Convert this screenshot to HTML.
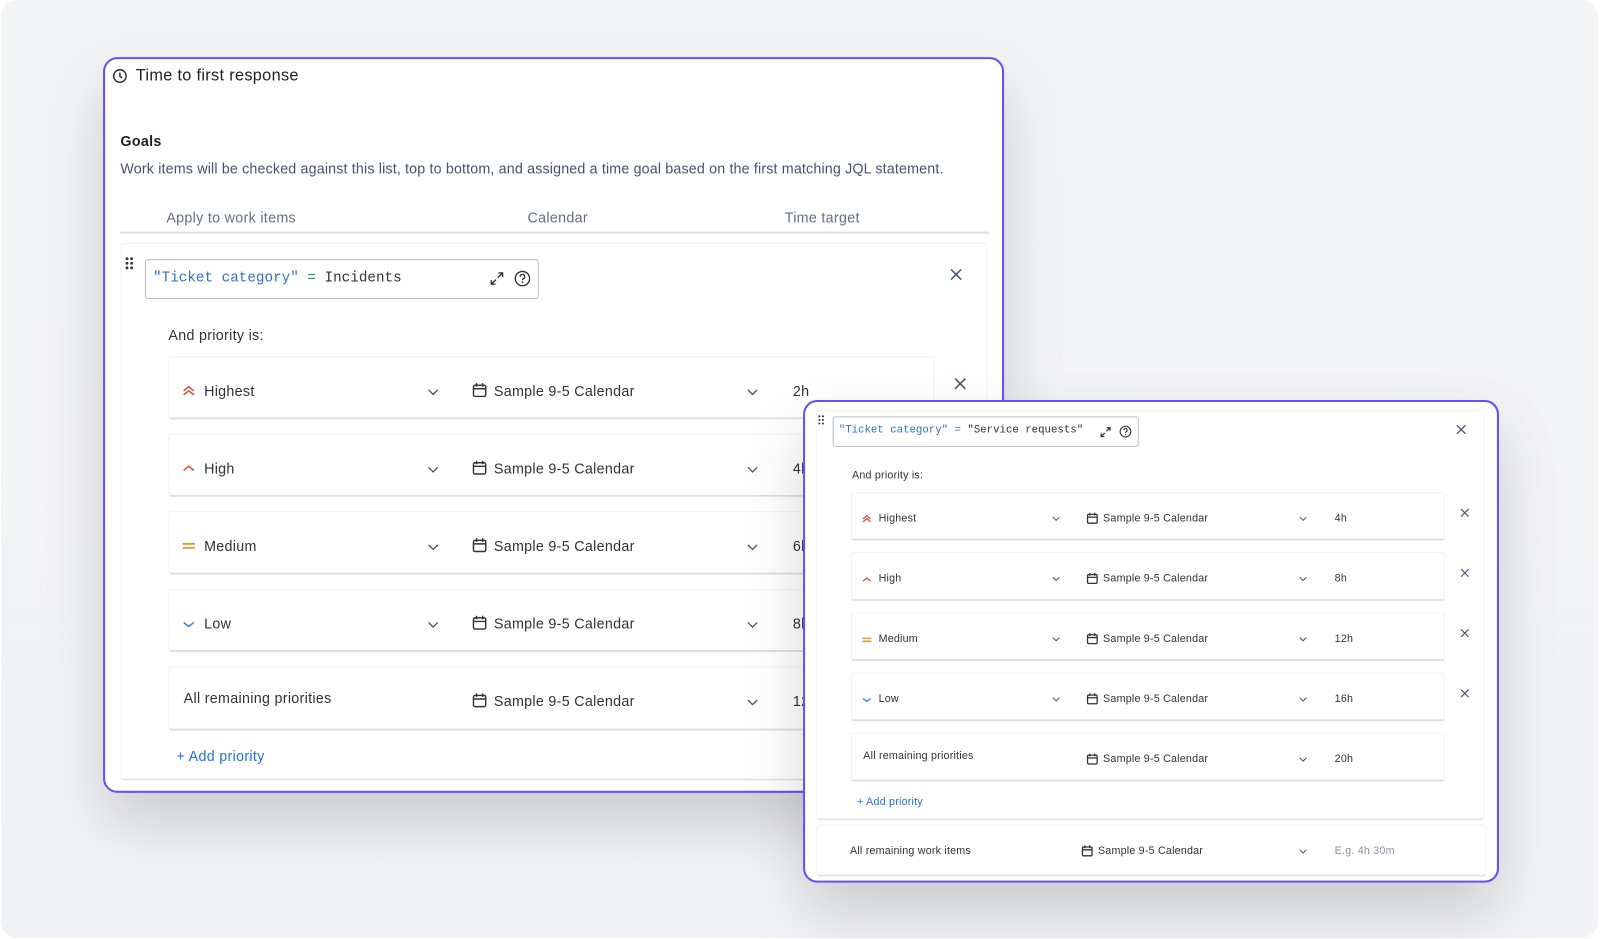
<!DOCTYPE html>
<html><head><meta charset="utf-8"><style>
*{box-sizing:border-box;margin:0;padding:0}
body{width:1600px;height:939px;background:#fff;font-family:"Liberation Sans",sans-serif;color:#2c333a;position:relative;overflow:hidden}
#w{position:absolute;left:0;top:0;width:1568px;height:920px;transform:scale(1.0204);transform-origin:0 0}
.abs{position:absolute}
.bg{left:1px;top:0;width:1565px;height:919px;background:linear-gradient(180deg,#f3f4f6,#f2f3f6);border-radius:16px}
.card{background:#fff;border:2px solid #6a4dff;border-radius:14px;box-shadow:0 30px 60px rgba(0,0,0,.16)}
.t{position:absolute;white-space:nowrap;letter-spacing:0.3px}
.s{letter-spacing:0.2px}
.row{position:absolute;background:#fff;border:1px solid #f0f1f3;border-bottom:2px solid #dcdfe4;border-radius:3px}
.mono{font-family:"Liberation Mono",monospace;letter-spacing:0}
svg{position:absolute;overflow:visible}
</style></head><body><div id="w">
<div class="abs bg"></div>

<div class="abs card" style="left:101px;top:56px;width:883px;height:721px;"></div>
<svg style="left:110px;top:67px" width="15" height="15" viewBox="0 0 16 16"><circle cx="8" cy="8" r="6.5" fill="none" stroke="#2c333a" stroke-width="1.6"/><path d="M8 4.5V8.3l2.3 1.6" fill="none" stroke="#2c333a" stroke-width="1.6"/></svg>
<div class="t" style="left:133px;top:66px;font-size:16px;color:#1d2125">Time to first response</div>
<div class="t" style="left:118px;top:130px;font-size:14px;font-weight:bold;color:#1d2125">Goals</div>
<div class="t" style="left:118px;top:157px;font-size:14px;color:#44546f;letter-spacing:0.15px">Work items will be checked against this list, top to bottom, and assigned a time goal based on the first matching JQL statement.</div>
<div class="t" style="left:163px;top:205px;font-size:14px;color:#626f86">Apply to work items</div>
<div class="t" style="left:517px;top:205px;font-size:14px;color:#626f86">Calendar</div>
<div class="t" style="left:769px;top:205px;font-size:14px;color:#626f86">Time target</div>
<div class="abs" style="left:118px;top:227px;width:851px;height:2px;background:#dcdfe4"></div>
<div class="abs" style="left:118px;top:238px;width:850px;height:527px;border:1px solid #f0f1f3;border-bottom:2px solid #e2e4e8;border-radius:4px;background:#fff"></div>
<svg style="left:123px;top:252px" width="8" height="12"><g fill="#2c333a"><circle cx="1.5" cy="1.5" r="1.4"/><circle cx="6" cy="1.5" r="1.4"/><circle cx="1.5" cy="6" r="1.4"/><circle cx="6" cy="6" r="1.4"/><circle cx="1.5" cy="10.5" r="1.4"/><circle cx="6" cy="10.5" r="1.4"/></g></svg>
<div class="abs" style="left:142px;top:254px;width:386px;height:39px;border:1px solid #b9bcc2;border-radius:3px"></div>
<div class="t mono" style="left:150px;top:265px;font-size:14px"><span style="color:#2f6fd6">"Ticket category"</span> <span style="color:#1f8a70">=</span> Incidents</div>
<svg style="left:480px;top:266px" width="14" height="14" viewBox="0 0 14 14" fill="none" stroke="#2c333a" stroke-width="1.4"><path d="M8.5 1.5h4v4M12.5 1.5l-4.5 4.5M5.5 12.5h-4v-4M1.5 12.5l4.5-4.5"/></svg>
<svg style="left:504px;top:265px" width="16" height="16" viewBox="0 0 16 16"><circle cx="8" cy="8" r="7" fill="none" stroke="#2c333a" stroke-width="1.3"/><path d="M5.8 6.2a2.2 2.2 0 1 1 3 2c-.6.3-.8.6-.8 1.3" fill="none" stroke="#2c333a" stroke-width="1.3"/><circle cx="8" cy="11.6" r=".9" fill="#2c333a"/></svg>
<svg style="left:931px;top:263px" width="12" height="12" viewBox="0 0 12 12" stroke="#44546f" stroke-width="1.5"><path d="M1 1l10 10M11 1L1 11"/></svg>
<div class="t" style="left:165px;top:320px;font-size:14px">And priority is:</div>

<div class="row" style="left:165px;top:349px;width:751px;height:62px"></div>
<div class="row" style="left:165px;top:425px;width:751px;height:62px"></div>
<div class="row" style="left:165px;top:501px;width:751px;height:62px"></div>
<div class="row" style="left:165px;top:577px;width:751px;height:62px"></div>
<div class="row" style="left:165px;top:653px;width:751px;height:63px"></div>

<svg style="left:179px;top:377px" width="12" height="11" viewBox="0 0 12 11" fill="none" stroke="#e5493a" stroke-width="1.5"><path d="M1 6l5-4 5 4M1 10l5-4 5 4"/></svg>
<div class="t" style="left:200px;top:375px;font-size:14px">Highest</div>
<svg style="left:179px;top:455px" width="12" height="8" viewBox="0 0 12 8" fill="none" stroke="#e5493a" stroke-width="1.5"><path d="M1 6l5-4 5 4"/></svg>
<div class="t" style="left:200px;top:451px;font-size:14px">High</div>
<svg style="left:179px;top:531px" width="12" height="8" viewBox="0 0 12 8" fill="none" stroke="#f18d13" stroke-width="1.6"><path d="M0 2h12M0 6h12"/></svg>
<div class="t" style="left:200px;top:527px;font-size:14px">Medium</div>
<svg style="left:179px;top:608px" width="12" height="8" viewBox="0 0 12 8" fill="none" stroke="#2684ff" stroke-width="1.5"><path d="M1 2l5 4 5-4"/></svg>
<div class="t" style="left:200px;top:603px;font-size:14px">Low</div>
<div class="t" style="left:180px;top:676px;font-size:14px">All remaining priorities</div>

<svg style="left:419px;top:381px" width="11" height="7" viewBox="0 0 11 7" fill="none" stroke="#44546f" stroke-width="1.3"><path d="M1 1l4.5 4.5L10 1"/></svg>
<svg style="left:419px;top:457px" width="11" height="7" viewBox="0 0 11 7" fill="none" stroke="#44546f" stroke-width="1.3"><path d="M1 1l4.5 4.5L10 1"/></svg>
<svg style="left:419px;top:533px" width="11" height="7" viewBox="0 0 11 7" fill="none" stroke="#44546f" stroke-width="1.3"><path d="M1 1l4.5 4.5L10 1"/></svg>
<svg style="left:419px;top:609px" width="11" height="7" viewBox="0 0 11 7" fill="none" stroke="#44546f" stroke-width="1.3"><path d="M1 1l4.5 4.5L10 1"/></svg>

<svg style="left:463px;top:375px" width="14" height="15" viewBox="0 0 14 15" fill="none" stroke="#2c333a" stroke-width="1.4"><rect x="1" y="2.5" width="12" height="11" rx="1.5"/><path d="M1 6h12M4 .5v3.5M10 .5v3.5"/></svg>
<div class="t" style="left:484px;top:375px;font-size:14px">Sample 9-5 Calendar</div>
<svg style="left:463px;top:451px" width="14" height="15" viewBox="0 0 14 15" fill="none" stroke="#2c333a" stroke-width="1.4"><rect x="1" y="2.5" width="12" height="11" rx="1.5"/><path d="M1 6h12M4 .5v3.5M10 .5v3.5"/></svg>
<div class="t" style="left:484px;top:451px;font-size:14px">Sample 9-5 Calendar</div>
<svg style="left:463px;top:527px" width="14" height="15" viewBox="0 0 14 15" fill="none" stroke="#2c333a" stroke-width="1.4"><rect x="1" y="2.5" width="12" height="11" rx="1.5"/><path d="M1 6h12M4 .5v3.5M10 .5v3.5"/></svg>
<div class="t" style="left:484px;top:527px;font-size:14px">Sample 9-5 Calendar</div>
<svg style="left:463px;top:603px" width="14" height="15" viewBox="0 0 14 15" fill="none" stroke="#2c333a" stroke-width="1.4"><rect x="1" y="2.5" width="12" height="11" rx="1.5"/><path d="M1 6h12M4 .5v3.5M10 .5v3.5"/></svg>
<div class="t" style="left:484px;top:603px;font-size:14px">Sample 9-5 Calendar</div>
<svg style="left:463px;top:679px" width="14" height="15" viewBox="0 0 14 15" fill="none" stroke="#2c333a" stroke-width="1.4"><rect x="1" y="2.5" width="12" height="11" rx="1.5"/><path d="M1 6h12M4 .5v3.5M10 .5v3.5"/></svg>
<div class="t" style="left:484px;top:679px;font-size:14px">Sample 9-5 Calendar</div>

<svg style="left:732px;top:381px" width="11" height="7" viewBox="0 0 11 7" fill="none" stroke="#44546f" stroke-width="1.3"><path d="M1 1l4.5 4.5L10 1"/></svg>
<svg style="left:732px;top:457px" width="11" height="7" viewBox="0 0 11 7" fill="none" stroke="#44546f" stroke-width="1.3"><path d="M1 1l4.5 4.5L10 1"/></svg>
<svg style="left:732px;top:533px" width="11" height="7" viewBox="0 0 11 7" fill="none" stroke="#44546f" stroke-width="1.3"><path d="M1 1l4.5 4.5L10 1"/></svg>
<svg style="left:732px;top:609px" width="11" height="7" viewBox="0 0 11 7" fill="none" stroke="#44546f" stroke-width="1.3"><path d="M1 1l4.5 4.5L10 1"/></svg>
<svg style="left:732px;top:685px" width="11" height="7" viewBox="0 0 11 7" fill="none" stroke="#44546f" stroke-width="1.3"><path d="M1 1l4.5 4.5L10 1"/></svg>
<div class="t" style="left:777px;top:375px;font-size:14px">2h</div>
<div class="t" style="left:777px;top:451px;font-size:14px">4h</div>
<div class="t" style="left:777px;top:527px;font-size:14px">6h</div>
<div class="t" style="left:777px;top:603px;font-size:14px">8h</div>
<div class="t" style="left:777px;top:679px;font-size:14px">12h</div>
<svg style="left:935px;top:370px" width="12" height="12" viewBox="0 0 12 12" stroke="#44546f" stroke-width="1.5"><path d="M1 1l10 10M11 1L1 11"/></svg>
<div class="t" style="left:173px;top:733px;font-size:14px;color:#1f6feb">+ Add priority</div>

<div class="abs card" style="left:787px;top:392px;width:682px;height:473px;"></div>
<div class="abs" style="left:800px;top:402px;width:655px;height:402px;border:1px solid #f0f1f3;border-bottom:2px solid #e2e4e8;border-radius:4px;background:#fff"></div>
<div class="abs" style="left:800px;top:808px;width:657px;height:51px;border:1px solid #f0f1f3;border-bottom:2px solid #e2e4e8;border-radius:4px;background:#fff"></div>
<svg style="left:802px;top:407px" width="6" height="9"><g fill="#2c333a"><circle cx="1" cy="1" r="1"/><circle cx="4.5" cy="1" r="1"/><circle cx="1" cy="4.5" r="1"/><circle cx="4.5" cy="4.5" r="1"/><circle cx="1" cy="8" r="1"/><circle cx="4.5" cy="8" r="1"/></g></svg>
<div class="abs" style="left:816px;top:408px;width:300px;height:30px;border:1px solid #b9bcc2;border-radius:3px"></div>
<div class="t mono" style="left:822px;top:416px;font-size:10.5px"><span style="color:#2f6fd6">"Ticket category"</span> <span style="color:#1f8a70">=</span> "Service requests"</div>
<svg style="left:1078px;top:418px" width="11" height="11" viewBox="0 0 14 14" fill="none" stroke="#2c333a" stroke-width="1.5"><path d="M8.5 1.5h4v4M12.5 1.5l-4.5 4.5M5.5 12.5h-4v-4M1.5 12.5l4.5-4.5"/></svg>
<svg style="left:1097px;top:417px" width="12" height="12" viewBox="0 0 16 16"><circle cx="8" cy="8" r="7" fill="none" stroke="#2c333a" stroke-width="1.4"/><path d="M5.8 6.2a2.2 2.2 0 1 1 3 2c-.6.3-.8.6-.8 1.3" fill="none" stroke="#2c333a" stroke-width="1.4"/><circle cx="8" cy="11.6" r=".9" fill="#2c333a"/></svg>
<svg style="left:1427px;top:416px" width="10" height="10" viewBox="0 0 12 12" stroke="#44546f" stroke-width="1.5"><path d="M1 1l10 10M11 1L1 11"/></svg>
<div class="t s" style="left:835px;top:460px;font-size:10.5px">And priority is:</div>

<div class="row" style="left:834px;top:482px;width:582px;height:48px"></div>
<div class="row" style="left:834px;top:541px;width:582px;height:48px"></div>
<div class="row" style="left:834px;top:600px;width:582px;height:48px"></div>
<div class="row" style="left:834px;top:659px;width:582px;height:48px"></div>
<div class="row" style="left:834px;top:718px;width:582px;height:48px"></div>

<svg style="left:845px;top:504px" width="9" height="8" viewBox="0 0 12 11" fill="none" stroke="#e5493a" stroke-width="1.7"><path d="M1 6l5-4 5 4M1 10l5-4 5 4"/></svg>
<div class="t s" style="left:861px;top:502px;font-size:10.5px">Highest</div>
<svg style="left:845px;top:565px" width="9" height="6" viewBox="0 0 12 8" fill="none" stroke="#e5493a" stroke-width="1.7"><path d="M1 6l5-4 5 4"/></svg>
<div class="t s" style="left:861px;top:561px;font-size:10.5px">High</div>
<svg style="left:845px;top:624px" width="9" height="6" viewBox="0 0 12 8" fill="none" stroke="#f18d13" stroke-width="1.7"><path d="M0 2h12M0 6h12"/></svg>
<div class="t s" style="left:861px;top:620px;font-size:10.5px">Medium</div>
<svg style="left:845px;top:683px" width="9" height="6" viewBox="0 0 12 8" fill="none" stroke="#2684ff" stroke-width="1.7"><path d="M1 2l5 4 5-4"/></svg>
<div class="t s" style="left:861px;top:679px;font-size:10.5px">Low</div>
<div class="t s" style="left:846px;top:735px;font-size:10.5px">All remaining priorities</div>

<svg style="left:1031px;top:506px" width="8" height="5" viewBox="0 0 11 7" fill="none" stroke="#44546f" stroke-width="1.4"><path d="M1 1l4.5 4.5L10 1"/></svg>
<svg style="left:1031px;top:565px" width="8" height="5" viewBox="0 0 11 7" fill="none" stroke="#44546f" stroke-width="1.4"><path d="M1 1l4.5 4.5L10 1"/></svg>
<svg style="left:1031px;top:624px" width="8" height="5" viewBox="0 0 11 7" fill="none" stroke="#44546f" stroke-width="1.4"><path d="M1 1l4.5 4.5L10 1"/></svg>
<svg style="left:1031px;top:683px" width="8" height="5" viewBox="0 0 11 7" fill="none" stroke="#44546f" stroke-width="1.4"><path d="M1 1l4.5 4.5L10 1"/></svg>

<svg style="left:1065px;top:502px" width="11" height="12" viewBox="0 0 14 15" fill="none" stroke="#2c333a" stroke-width="1.6"><rect x="1" y="2.5" width="12" height="11" rx="1.5"/><path d="M1 6h12M4 .5v3.5M10 .5v3.5"/></svg>
<div class="t s" style="left:1081px;top:502px;font-size:10.5px">Sample 9-5 Calendar</div>
<svg style="left:1065px;top:561px" width="11" height="12" viewBox="0 0 14 15" fill="none" stroke="#2c333a" stroke-width="1.6"><rect x="1" y="2.5" width="12" height="11" rx="1.5"/><path d="M1 6h12M4 .5v3.5M10 .5v3.5"/></svg>
<div class="t s" style="left:1081px;top:561px;font-size:10.5px">Sample 9-5 Calendar</div>
<svg style="left:1065px;top:620px" width="11" height="12" viewBox="0 0 14 15" fill="none" stroke="#2c333a" stroke-width="1.6"><rect x="1" y="2.5" width="12" height="11" rx="1.5"/><path d="M1 6h12M4 .5v3.5M10 .5v3.5"/></svg>
<div class="t s" style="left:1081px;top:620px;font-size:10.5px">Sample 9-5 Calendar</div>
<svg style="left:1065px;top:679px" width="11" height="12" viewBox="0 0 14 15" fill="none" stroke="#2c333a" stroke-width="1.6"><rect x="1" y="2.5" width="12" height="11" rx="1.5"/><path d="M1 6h12M4 .5v3.5M10 .5v3.5"/></svg>
<div class="t s" style="left:1081px;top:679px;font-size:10.5px">Sample 9-5 Calendar</div>
<svg style="left:1065px;top:738px" width="11" height="12" viewBox="0 0 14 15" fill="none" stroke="#2c333a" stroke-width="1.6"><rect x="1" y="2.5" width="12" height="11" rx="1.5"/><path d="M1 6h12M4 .5v3.5M10 .5v3.5"/></svg>
<div class="t s" style="left:1081px;top:738px;font-size:10.5px">Sample 9-5 Calendar</div>
<svg style="left:1060px;top:828px" width="11" height="12" viewBox="0 0 14 15" fill="none" stroke="#2c333a" stroke-width="1.6"><rect x="1" y="2.5" width="12" height="11" rx="1.5"/><path d="M1 6h12M4 .5v3.5M10 .5v3.5"/></svg>
<div class="t s" style="left:1076px;top:828px;font-size:10.5px">Sample 9-5 Calendar</div>
<div class="t s" style="left:833px;top:828px;font-size:10.5px">All remaining work items</div>

<svg style="left:1273px;top:506px" width="8" height="5" viewBox="0 0 11 7" fill="none" stroke="#44546f" stroke-width="1.4"><path d="M1 1l4.5 4.5L10 1"/></svg>
<svg style="left:1273px;top:565px" width="8" height="5" viewBox="0 0 11 7" fill="none" stroke="#44546f" stroke-width="1.4"><path d="M1 1l4.5 4.5L10 1"/></svg>
<svg style="left:1273px;top:624px" width="8" height="5" viewBox="0 0 11 7" fill="none" stroke="#44546f" stroke-width="1.4"><path d="M1 1l4.5 4.5L10 1"/></svg>
<svg style="left:1273px;top:683px" width="8" height="5" viewBox="0 0 11 7" fill="none" stroke="#44546f" stroke-width="1.4"><path d="M1 1l4.5 4.5L10 1"/></svg>
<svg style="left:1273px;top:742px" width="8" height="5" viewBox="0 0 11 7" fill="none" stroke="#44546f" stroke-width="1.4"><path d="M1 1l4.5 4.5L10 1"/></svg>
<svg style="left:1273px;top:832px" width="8" height="5" viewBox="0 0 11 7" fill="none" stroke="#44546f" stroke-width="1.4"><path d="M1 1l4.5 4.5L10 1"/></svg>
<div class="t s" style="left:1308px;top:502px;font-size:10.5px">4h</div>
<div class="t s" style="left:1308px;top:561px;font-size:10.5px">8h</div>
<div class="t s" style="left:1308px;top:620px;font-size:10.5px">12h</div>
<div class="t s" style="left:1308px;top:679px;font-size:10.5px">16h</div>
<div class="t s" style="left:1308px;top:738px;font-size:10.5px">20h</div>
<div class="t s" style="left:1308px;top:828px;font-size:10.5px;color:#8590a2">E.g. 4h 30m</div>
<svg style="left:1431px;top:498px" width="9" height="9" viewBox="0 0 12 12" stroke="#44546f" stroke-width="1.5"><path d="M1 1l10 10M11 1L1 11"/></svg>
<svg style="left:1431px;top:557px" width="9" height="9" viewBox="0 0 12 12" stroke="#44546f" stroke-width="1.5"><path d="M1 1l10 10M11 1L1 11"/></svg>
<svg style="left:1431px;top:616px" width="9" height="9" viewBox="0 0 12 12" stroke="#44546f" stroke-width="1.5"><path d="M1 1l10 10M11 1L1 11"/></svg>
<svg style="left:1431px;top:675px" width="9" height="9" viewBox="0 0 12 12" stroke="#44546f" stroke-width="1.5"><path d="M1 1l10 10M11 1L1 11"/></svg>
<div class="t s" style="left:840px;top:780px;font-size:10.5px;color:#1f6feb">+ Add priority</div>
</div></body></html>
